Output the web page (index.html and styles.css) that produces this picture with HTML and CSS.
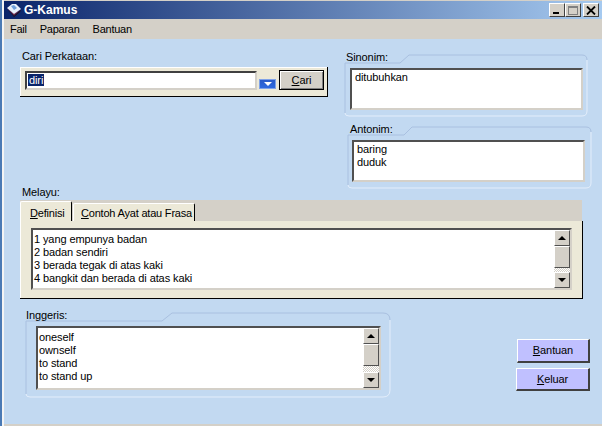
FILE: index.html
```html
<!DOCTYPE html>
<html lang="en">
<head>
    <meta charset="UTF-8">
    <meta name="viewport" content="width=device-width, initial-scale=1.0">
    <title>G-Kamus</title>
    <link rel="stylesheet" href="styles.css">
</head>
<body>
    <div class="window">
        <div class="titlebar">
            <svg class="app-icon" width="15" height="14" viewBox="0 0 15 14">
                <path d="M0 6 L7 13 L14 7 L13 9 L7 14 Z" fill="#300808"/>
                <path d="M0 5 L7 12 L14 6 L7 11 Z" fill="#c02020"/>
                <path d="M0 5 L5 1 L9 1 L14 6 L7 11 Z" fill="#e8f0fb"/>
                <path d="M4 3 L7 2 L10 5 L7 7 Z" fill="#6fa0dc"/>
            </svg>
            <span class="title-text">G-Kamus</span>
            <div class="title-buttons">
                <div class="title-btn"><span class="min-glyph"></span></div>
                <div class="title-btn"><span class="max-glyph"></span></div>
                <div class="title-btn close-btn">
                    <svg width="10" height="9" viewBox="0 0 10 9"><path d="M1 0.5 L9 8.5 M9 0.5 L1 8.5" stroke="#000" stroke-width="1.8"/></svg>
                </div>
            </div>
        </div>

        <div class="menubar">
            <span>Fail</span>
            <span>Paparan</span>
            <span>Bantuan</span>
        </div>

        <div class="client">
            <div class="top-row">
                <div class="search-col">
                    <div class="search-label">Cari Perkataan:</div>
                    <div class="search-panel">
                        <div class="search-input"><span class="selected">diri</span></div>
                        <div class="drop-btn"><span class="drop-arrow"></span></div>
                        <div class="cari-btn"><u>C</u>ari</div>
                    </div>
                </div>
                <div class="right-col">
                    <div class="group group-sinonim">
                        <svg class="frame" width="244" height="63" viewBox="0 0 244 63">
                            <path d="M1 59 V9 H56 L65 1 H238 Q243 1 243 6" fill="none" stroke="#a9c0e0"/>
                            <path d="M243 6 V57 Q243 62 238 62 H5 Q1 62 1 59" fill="none" stroke="#e4eefb"/>
                        </svg>
                        <div class="group-label">Sinonim:</div>
                        <div class="listbox list-short">ditubuhkan</div>
                    </div>
                    <div class="group group-antonim">
                        <svg class="frame" width="245" height="63" viewBox="0 0 245 63">
                            <path d="M1 59 V9 H57 L65 1 H239 Q244 1 244 6" fill="none" stroke="#a9c0e0"/>
                            <path d="M244 6 V57 Q244 62 239 62 H5 Q1 62 1 59" fill="none" stroke="#e4eefb"/>
                        </svg>
                        <div class="group-label">Antonim:</div>
                        <div class="listbox list-short">baring<br>duduk</div>
                    </div>
                </div>
            </div>

            <div class="melayu">
                <div class="melayu-label">Melayu:</div>
                <div class="tabstrip">
                    <div class="tab tab-active"><u>D</u>efinisi</div>
                    <div class="tab"><u>C</u>ontoh Ayat atau Frasa</div>
                </div>
                <div class="tab-panel">
                    <div class="listbox list-scroll list-def">
                        <div class="list-text">1 yang empunya badan<br>2 badan sendiri<br>3 berada tegak di atas kaki<br>4 bangkit dan berada di atas kaki</div>
                        <div class="scrollbar">
                            <div class="sb-btn"><span class="arrow-up"></span></div>
                            <div class="sb-thumb"></div>
                            <div class="sb-track"></div>
                            <div class="sb-btn"><span class="arrow-down"></span></div>
                        </div>
                    </div>
                </div>
            </div>

            <div class="bottom-row">
                <div class="group group-inggeris">
                    <svg class="frame" width="366" height="86" viewBox="0 0 366 86">
                        <path d="M1 82 V9 H137 L147 1 H358 Q365 1 365 8" fill="none" stroke="#a9c0e0"/>
                        <path d="M365 8 V78 Q365 85 358 85 H5 Q1 85 1 82" fill="none" stroke="#e4eefb"/>
                    </svg>
                    <div class="group-label">Inggeris:</div>
                    <div class="listbox list-scroll list-eng">
                        <div class="list-text">oneself<br>ownself<br>to stand<br>to stand up</div>
                        <div class="scrollbar">
                            <div class="sb-btn"><span class="arrow-up"></span></div>
                            <div class="sb-thumb"></div>
                            <div class="sb-track"></div>
                            <div class="sb-btn"><span class="arrow-down"></span></div>
                        </div>
                    </div>
                </div>
                <div class="action-col">
                    <div class="action-btn btn-bantuan"><u>B</u>antuan</div>
                    <div class="action-btn"><u>K</u>eluar</div>
                </div>
            </div>
        </div>
    </div>
</body>
</html>
```

FILE: styles.css
```css
html, body {
    margin: 0;
    padding: 0;
}

body {
    font-family: "Liberation Sans", Arial, sans-serif;
    font-size: 11px;
    line-height: 13px;
    letter-spacing: -0.1px;
    color: #000;
    width: 602px;
    height: 426px;
    overflow: hidden;
    background: #d4d0c8;
}

.window {
    box-sizing: border-box;
    width: 602px;
    height: 426px;
    padding: 1px 0 2px 4px;
    display: flex;
    flex-direction: column;
    background: #d4d0c8;
    box-shadow: inset 2px 0 0 #4a7ab5, inset 4px 0 0 #f4f4f4;
}

.titlebar {
    height: 18px;
    display: flex;
    align-items: center;
    background: linear-gradient(to right, #0a246a, #a6caf0);
    color: #fff;
    font-size: 12px;
    font-weight: bold;
    letter-spacing: 0;
}

.app-icon {
    margin-left: 3px;
}

.title-text {
    margin-left: 2px;
}

.title-buttons {
    margin-left: auto;
    margin-right: 3px;
    display: flex;
}

.title-btn {
    box-sizing: border-box;
    width: 16px;
    height: 14px;
    background: #d4d0c8;
    border: 1px solid;
    border-color: #fff #404040 #404040 #fff;
    display: flex;
    align-items: center;
    justify-content: center;
    position: relative;
}

.close-btn {
    margin-left: 2px;
}

.min-glyph {
    width: 6px;
    height: 2px;
    background: #000;
    margin-top: 6px;
    margin-left: -2px;
}

.max-glyph {
    box-sizing: border-box;
    width: 10px;
    height: 9px;
    border: 1px solid #808080;
    border-top-width: 2px;
}

.menubar {
    height: 20px;
    display: flex;
    align-items: center;
    gap: 13px;
    padding-left: 6px;
    background: #d4d0c8;
    letter-spacing: -0.25px;
}

.client {
    flex: 1;
    background: #c2d9f1;
    display: flex;
    flex-direction: column;
}

.top-row {
    display: flex;
    height: 149px;
}

.search-col {
    width: 308px;
    margin-left: 16px;
}

.search-label {
    margin: 11px 0 0 2px;
    height: 17px;
}

.search-panel {
    box-sizing: border-box;
    height: 30px;
    background: #ece9d8;
    border-right: 1px solid #000;
    border-bottom: 1px solid #000;
    box-shadow: inset 1px 1px 0 #fff;
    display: flex;
    align-items: flex-start;
    padding: 4px 0 0 5px;
}

.search-input {
    box-sizing: border-box;
    width: 232px;
    height: 19px;
    background: #fff;
    border: 2px solid;
    border-color: #404040 #d4d0c8 #d4d0c8 #404040;
    padding: 1px 0 0 1px;
}

.selected {
    background: #0a246a;
    color: #fff;
    padding: 0 1px;
}

.drop-btn {
    box-sizing: border-box;
    width: 17px;
    height: 10px;
    margin: 8px 0 0 2px;
    background: linear-gradient(#2a5bc8, #2f6ae0);
    border: 1px solid #7fa2e8;
    display: flex;
    align-items: center;
    justify-content: center;
}

.drop-arrow {
    width: 0;
    height: 0;
    border-left: 4px solid transparent;
    border-right: 4px solid transparent;
    border-top: 4px solid #fff;
}

.cari-btn {
    box-sizing: border-box;
    width: 45px;
    height: 20px;
    margin: -1px 0 0 3px;
    background: #d4d0c8;
    border: 1px solid #000;
    box-shadow: inset 1px 1px 0 #fff, inset -1px -1px 0 #808080;
    text-align: center;
    line-height: 18px;
}

.right-col {
    margin-left: 16px;
    padding-top: 15px;
    width: 254px;
}

.group {
    position: relative;
    box-sizing: border-box;
}

.frame {
    position: absolute;
    left: 0;
    top: 0;
}

.group-label {
    position: relative;
    height: 17px;
    margin-top: -3px;
    line-height: 12px;
}

.group-sinonim {
    width: 244px;
    height: 62px;
    padding-left: 2px;
    padding-top: 0.02px;
}

.group-antonim {
    width: 245px;
    height: 62px;
    margin: 10px 0 0 3px;
    padding-left: 3px;
    padding-top: 0.02px;
}

.group-sinonim .listbox {
    margin-left: 4px;
}

.group-antonim .listbox {
    margin-left: 2px;
}

.listbox {
    position: relative;
    box-sizing: border-box;
    background: #fff;
    border: 2px solid;
    border-color: #505050 #d4d0c8 #d4d0c8 #505050;
}

.list-short {
    width: 233px;
    height: 42px;
    padding: 1px 0 0 3px;
}

.melayu {
    margin-left: 16px;
    width: 562px;
}

.melayu-label {
    height: 14px;
    margin-left: 2px;
    margin-top: -2px;
}

.tabstrip {
    display: flex;
    height: 21px;
    align-items: flex-end;
    background: #d4d0c8;
}

.tab {
    box-sizing: border-box;
    height: 18px;
    padding: 3px 0 0 7px;
    background: #ece9d8;
    border-top: 1px solid #fff;
    border-left: 1px solid #fff;
    border-right: 1px solid #000;
    border-radius: 2px 2px 0 0;
    margin-left: 1px;
    width: 122px;
    white-space: nowrap;
    letter-spacing: -0.2px;
}

.tab-active {
    height: 20px;
    margin-left: 0;
    padding: 5px 0 0 9px;
    width: 52px;
}

.tab-panel {
    box-sizing: border-box;
    height: 78px;
    background: #ece9d8;
    border-right: 1px solid #000;
    border-bottom: 1px solid #000;
    box-shadow: inset 1px 0 0 #fff;
    padding: 7px 0 0 11px;
    width: 563px;
}

.list-scroll {
    display: flex;
}

.list-def {
    width: 541px;
    height: 62px;
}

.list-eng {
    width: 345px;
    height: 64px;
    margin-left: 11px;
}

.list-text {
    flex: 1;
    padding: 3px 0 0 1px;
}

.scrollbar {
    width: 16px;
    display: flex;
    flex-direction: column;
}

.sb-btn {
    box-sizing: border-box;
    height: 16px;
    background: #d4d0c8;
    border: 1px solid;
    border-color: #fff #505050 #505050 #fff;
    display: flex;
    align-items: center;
    justify-content: center;
}

.arrow-up {
    width: 0;
    height: 0;
    border-left: 4px solid transparent;
    border-right: 4px solid transparent;
    border-bottom: 4px solid #000;
}

.arrow-down {
    width: 0;
    height: 0;
    border-left: 4px solid transparent;
    border-right: 4px solid transparent;
    border-top: 4px solid #000;
}

.sb-thumb {
    box-sizing: border-box;
    height: 22px;
    background: #d4d0c8;
    border: 1px solid;
    border-color: #fff #505050 #505050 #fff;
}

.sb-track {
    flex: 1;
    background: repeating-conic-gradient(#d4d0c8 0 25%, #fff 0 50%) 0 0 / 2px 2px;
}

.bottom-row {
    display: flex;
    margin-top: 13px;
}

.group-inggeris {
    width: 366px;
    height: 85px;
    margin-left: 21px;
    padding-top: 0.02px;
}

.group-inggeris .group-label {
    margin-left: 1px;
}

.action-col {
    margin-left: 125px;
    padding-top: 27px;
    display: flex;
    flex-direction: column;
    align-items: flex-end;
    width: 74px;
}

.action-btn {
    box-sizing: border-box;
    width: 74px;
    height: 23px;
    background: #c0c0ff;
    border-style: solid;
    border-width: 1px 2px 2px 1px;
    border-color: #fff #404040 #404040 #fff;
    text-align: center;
    line-height: 20px;
    margin-bottom: 6px;
}

.btn-bantuan {
    width: 73px;
    height: 24px;
    margin-bottom: 5px;
}
```
